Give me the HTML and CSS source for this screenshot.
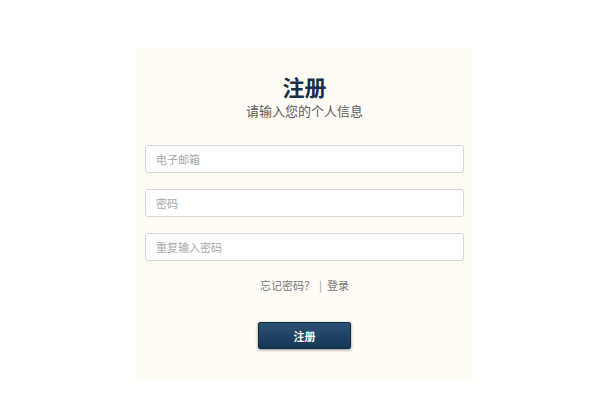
FILE: index.html
```html
<!DOCTYPE html>
<html lang="zh">
<head>
<meta charset="utf-8">
<link rel="stylesheet" href="styles.css">
</head>
<body>
<div class="panel">
  <h1 class="title">注册</h1>
  <p class="subtitle">请输入您的个人信息</p>
  <form class="form">
    <input class="field" type="text" placeholder="电子邮箱">
    <input class="field" type="password" placeholder="密码">
    <input class="field" type="password" placeholder="重复输入密码">
    <div class="links"><a class="link">忘记密码？</a><span class="sep">|</span><a class="link">登录</a></div>
    <button class="btn" type="button">注册</button>
  </form>
</div>
</body>
</html>
```

FILE: styles.css
```css
html, body {
  margin: 0;
  padding: 0;
  background: #ffffff;
  font-family: "Noto Sans CJK SC", "Noto Sans", sans-serif;
}
.panel {
  box-sizing: border-box;
  margin: 47px 0 0 136px;
  width: 337px;
  height: 333px;
  background: #fefcf5;
  padding: 26px 9px 0;
  text-align: center;
}
.title {
  margin: 0;
  font-size: 22px;
  line-height: 26px;
  font-weight: 700;
  color: #15304c;
}
.subtitle {
  margin: 2px 0 0;
  font-size: 13px;
  line-height: 20px;
  color: #5a5a5a;
}
.form {
  display: flex;
  flex-direction: column;
  align-items: center;
  margin-top: 24px;
}
.field {
  box-sizing: border-box;
  width: 100%;
  height: 28px;
  margin: 0 0 16px;
  padding: 0 10px;
  border: 1px solid #d6d6d6;
  border-radius: 3px;
  background: #fff;
  font-family: inherit;
  font-size: 11px;
  color: #333;
  outline: none;
}
.field::placeholder {
  color: #a8a8a8;
}
.links {
  font-size: 11px;
  line-height: 16px;
  color: #777;
  display: flex;
  align-items: center;
}
.link {
  color: #777;
}
.sep {
  margin: 0 5px 0 4px;
  color: #999;
}
.btn {
  margin-top: 29px;
  width: 93px;
  height: 27px;
  border: 1px solid #0f2b46;
  border-radius: 2px;
  background: linear-gradient(#2b5273, #173655);
  box-shadow: 0 1px 3px rgba(0, 0, 0, 0.45);
  color: #fff;
  font-family: inherit;
  font-size: 11px;
  font-weight: 700;
  padding: 0;
}
```
